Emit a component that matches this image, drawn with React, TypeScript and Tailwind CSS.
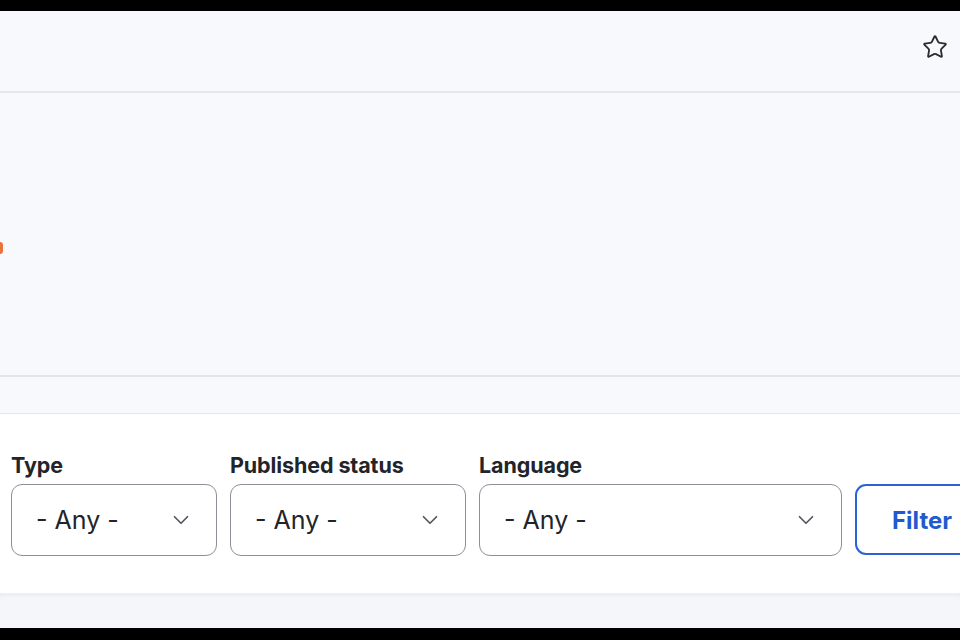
import React from "react";
import { Star, ChevronDown } from "lucide-react";

function SelectField({ label, width }: { label: string; width: string }) {
  return (
    <div className="flex flex-col gap-[7px]">
      <label className="text-[21.5px] leading-6 font-bold text-[#232429] tracking-[-0.1px]">{label}</label>
      <div
        className={`${width} h-[72px] flex items-center justify-between pl-[24px] pr-[22px] bg-white border-[1.5px] border-[#8e9099] rounded-[11px]`}
      >
        <span className="text-[25px] text-[#232429] pt-[2px]">- Any -</span>
        <ChevronDown className="w-[26px] h-[26px] text-[#55575e]" strokeWidth={1.6} />
      </div>
    </div>
  );
}

export default function App() {
  return (
    <div
      className="w-[960px] h-[640px] bg-black pt-[11px] pb-[12px] flex flex-col overflow-hidden"
      style={{ fontFamily: "Inter, 'Liberation Sans', sans-serif" }}
    >
      <header className="h-[82px] shrink-0 bg-[#f8f9fc] border-b-2 border-[#e6e7ec] flex items-center justify-end pr-[12px] pb-[8px]">
        <Star className="w-[26px] h-[26px] text-[#2b2c31]" strokeWidth={1.7} />
      </header>

      <section className="h-[284px] shrink-0 bg-[#f8f9fc] border-b-2 border-[#e3e4ea] flex items-center pt-[28px]">
        <div className="w-[3px] h-[12px] bg-[#e8743b] rounded-r-full" />
      </section>

      <div className="h-[37px] shrink-0 bg-[#f8f9fc] border-b border-[#e6e7ec]" />

      <section className="h-[179px] shrink-0 bg-white pt-[39px] pl-[11px] flex items-start gap-[13px]">
        <SelectField label="Type" width="w-[206px]" />
        <SelectField label="Published status" width="w-[236px]" />
        <SelectField label="Language" width="w-[363px]" />
        <div className="flex flex-col gap-[7px]">
          <div className="h-6" />
          <button className="w-[140px] h-[71px] shrink-0 flex items-center pl-[35px] pt-[2px] bg-white border-2 border-[#2a63d6] rounded-[11px] text-[24px] font-bold text-[#1f5bd0]">
            Filter
          </button>
        </div>
      </section>

      <div className="flex-1 bg-[#f5f6fa] shadow-[inset_0_3px_4px_-2px_rgba(0,0,0,0.06)] border-t border-[#eceef2]" />
    </div>
  );
}
